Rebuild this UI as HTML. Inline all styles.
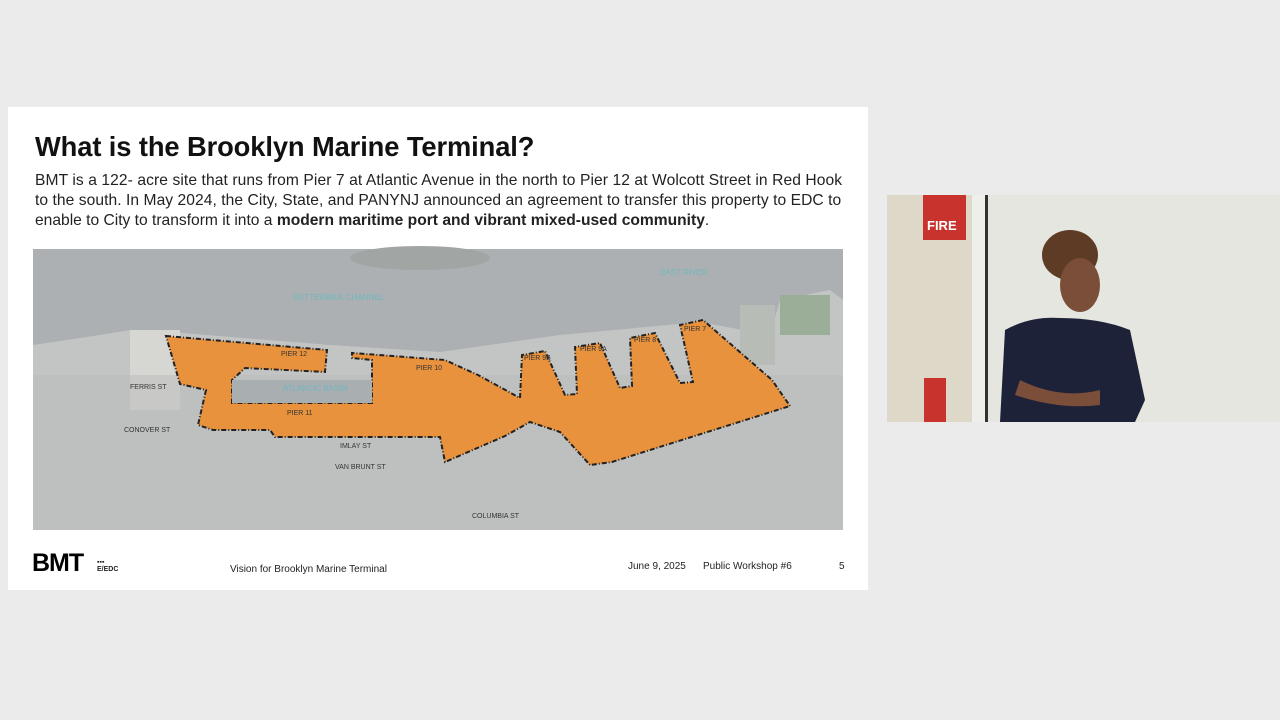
<!DOCTYPE html>
<html><head><meta charset="utf-8"><style>
body{margin:0;width:1280px;height:720px;background:#ebebeb;position:relative;overflow:hidden;font-family:"Liberation Sans",sans-serif}
.slide{position:absolute;left:8px;top:107px;width:860px;height:483px;background:#fff}
h1{position:absolute;left:27px;top:24px;margin:0;font-size:27.3px;font-weight:bold;color:#111;letter-spacing:-0.1px}
.p{position:absolute;left:27px;top:64px;width:815px;font-size:15.6px;line-height:20px;color:#222}
.p span{display:block;white-space:nowrap}
.ft{position:absolute;font-size:10px;color:#222}
</style></head><body>
<div class="slide">
<h1>What is the Brooklyn Marine Terminal?</h1>
<div class="p"><span style="letter-spacing:0.09px">BMT is a 122- acre site that runs from Pier 7 at Atlantic Avenue in the north to Pier 12 at Wolcott Street in Red Hook</span><span style="letter-spacing:0.06px">to the south. In May 2024, the City, State, and PANYNJ announced an agreement to transfer this property to EDC to</span><span>enable to City to transform it into a <b>modern maritime port and vibrant mixed-used community</b>.</span></div>
<div class="ft" style="left:24px;top:442px;font-size:25px;font-weight:bold;color:#000;letter-spacing:-1px">BMT</div>
<div class="ft" style="left:89px;top:452px;font-size:7px;font-weight:bold;line-height:7px">▪▪▪<br>E/EDC</div>
<div class="ft" style="left:222px;top:457px">Vision for Brooklyn Marine Terminal</div>
<div class="ft" style="left:620px;top:454px">June 9, 2025</div>
<div class="ft" style="left:695px;top:454px">Public Workshop #6</div>
<div class="ft" style="left:831px;top:454px">5</div>
</div>
<svg style="position:absolute;left:0;top:0" width="1280" height="720">
<rect x="33" y="249" width="810" height="281" fill="#c3c5c5"/>
<path d="M33 249H843V300L830 290 780 300 770 335 700 322 560 335 440 352 330 345 170 332 130 330 100 335 33 345Z" fill="#acb0b2"/>
<ellipse cx="420" cy="258" rx="70" ry="12" fill="#a1a5a3"/>
<rect x="780" y="295" width="50" height="40" fill="#9bae98"/>
<rect x="740" y="305" width="35" height="60" fill="#b8bcb6"/>
<rect x="130" y="330" width="50" height="80" fill="#d6d6d3"/>
<rect x="33" y="375" width="810" height="155" fill="#b9bbba" opacity=".5"/>
<polygon points="166,336 327,350 325,372 245,368 232,380 232,403 372,403 372,360 352,358 352,353 445,360 478,375 520,398 522,355 545,351 565,395 577,394 575,347 600,343 620,388 632,386 630,338 655,333 680,383 693,382 680,325 703,320 772,380 790,406 612,462 590,465 560,432 530,422 505,436 445,462 440,437 275,437 270,430 213,430 198,425 206,390 180,384" fill="#e8923e" stroke="#222" stroke-width="2" stroke-dasharray="5,2,1,2"/>
<rect x="232" y="380" width="140" height="23" fill="#a9aeb0"/>
<g font-size="7" fill="#333" font-family="Liberation Sans">
<text x="281" y="356">PIER 12</text><text x="416" y="370">PIER 10</text><text x="287" y="415">PIER 11</text>
<text x="524" y="360">PIER 9B</text><text x="580" y="351">PIER 9A</text><text x="634" y="342">PIER 8</text><text x="684" y="331">PIER 7</text>
<text x="130" y="389">FERRIS ST</text><text x="124" y="432">CONOVER ST</text><text x="340" y="448">IMLAY ST</text><text x="335" y="469">VAN BRUNT ST</text><text x="472" y="518">COLUMBIA ST</text>
</g>
<g font-size="8" fill="#6fb8c0"><text x="293" y="300">BUTTERMILK CHANNEL</text><text x="660" y="275">EAST RIVER</text><text x="283" y="391">ATLANTIC BASIN</text></g>
<rect x="887" y="195" width="393" height="227" fill="#e4e6df"/>
<rect x="887" y="195" width="98" height="227" fill="#ded8c8"/>
<rect x="972" y="195" width="14" height="227" fill="#eeeeea"/>
<rect x="985" y="195" width="3" height="227" fill="#333"/>
<rect x="923" y="195" width="43" height="45" fill="#c8332e"/>
<text x="927" y="230" font-size="13" font-weight="bold" fill="#fff">FIRE</text>
<rect x="924" y="378" width="22" height="44" fill="#c8332e"/>
<path d="M1000 422L1005 330Q1030 316 1060 318Q1100 318 1130 330L1145 400 1135 422Z" fill="#1d2238"/>
<ellipse cx="1070" cy="255" rx="28" ry="25" fill="#5e3b24"/>
<ellipse cx="1080" cy="285" rx="20" ry="27" fill="#7a4e38"/>
<path d="M1020 380Q1060 400 1100 390L1100 405Q1060 410 1015 395Z" fill="#7a4e38"/>
</svg>
</body></html>
